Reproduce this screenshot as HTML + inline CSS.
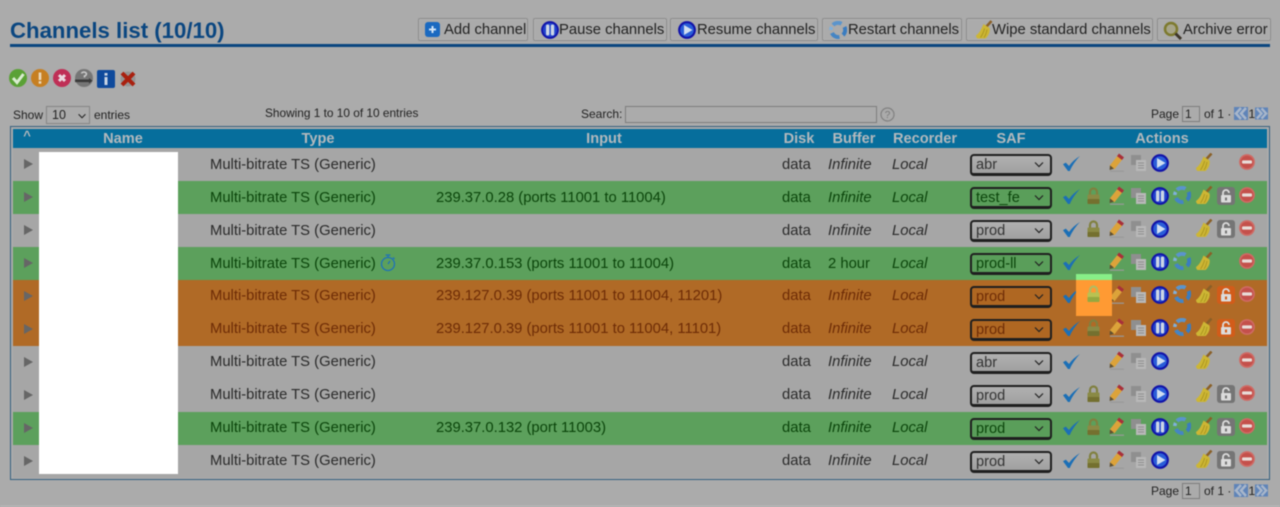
<!DOCTYPE html>
<html><head><meta charset="utf-8"><title>Channels list</title>
<style>
html,body{margin:0;padding:0}
body{width:1280px;height:507px;position:relative;overflow:hidden;background:#ababab;font-family:"Liberation Sans",sans-serif;color:#222}
div,span,svg{position:absolute}
#wrap{left:0;top:0;width:1280px;height:507px;filter:blur(.45px)}
.t{white-space:nowrap;line-height:16px}
h1{position:absolute;margin:0;left:10px;top:18px;font-size:22.2px;line-height:26px;color:#0a4680;font-weight:bold;white-space:nowrap}
.btn{top:18px;height:21px;border:1px solid #8e8e8e;border-radius:2px;box-shadow:inset 0 0 0 1px #b0b0b0;font-size:14.8px;line-height:22px;white-space:nowrap;color:#222}
.btn span{top:0;white-space:nowrap}
.th{top:131px;font-size:14.6px;font-weight:bold;color:#b3b9bd;line-height:16px;transform:translateX(-50%);white-space:nowrap}
.r{left:13px;width:1254px;height:33px;font-size:14.8px}
.g{background:#a6a6a6;color:#2a2a2a}
.v{background:#5ca05c;color:#0b450b}
.o{background:#b06a26;color:#6e2c06}
.r .t{top:8px}
.r.u .t{top:9px}
.ty{left:197px}.in{left:423px}.di{left:769px}.bu{left:815px;font-style:italic}.re{left:879px;font-style:italic}
.ar{left:11px;top:11px;width:0;height:0;border-left:9px solid #666;border-top:5.5px solid transparent;border-bottom:5.5px solid transparent}
.s{left:957px;top:6px;width:78px;height:17px;border:2px solid #1f1f1f;border-bottom-width:3px;border-radius:4px;line-height:18px;font-size:14.6px;padding:0;box-sizing:content-box}
.g .s{background:linear-gradient(#b0b0b0,#a0a0a0);color:#333}
.v .s{background:#5a9e5a;color:#0b450b}
.o .s{background:#af6722;color:#6e2c06}
.s b{position:absolute;left:4px;top:0;font-weight:normal}
.s svg{left:62px;top:5px;width:10px;height:7px}
.ck{left:1050px;top:8px;width:17px;height:15px}
.lk{left:1074px;top:6px;width:13px;height:17px}
.pe{left:1096px;top:5px;width:16px;height:19px}
.co{left:1118px;top:7px;width:15px;height:16px}
.pl{left:1138px;top:6px;width:18px;height:18px}
.rf{left:1160px;top:5px;width:18px;height:18px}
.br{left:1183px;top:5px;width:17px;height:18px}
.ul{left:1204px;top:6px;width:18px;height:18px;color:#757575}
.o .ul{color:#d25c1a}
.mi{left:1226px;top:6px;width:16px;height:16px}
.sm{font-size:12px;line-height:14px;white-space:nowrap;color:#222}
.inp{border:1px solid #7e7e7e;box-sizing:border-box;background:#ababab}
</style></head><body>
<svg width="0" height="0" style="left:0;top:0">
<symbol id="chk" viewBox="0 0 17 15"><path d="M0 8.2 L2.8 6.6 L6 10 C8.8 6 12.6 2.6 17 0 C12.8 4.4 9.2 9.4 6.8 15 L5 15 Z" fill="#1b6fb6"/></symbol>
<symbol id="lock" viewBox="0 0 13 17"><path d="M3 8V5a3.5 3.5 0 0 1 7 0v3" fill="none" stroke="#80803f" stroke-width="2.2"/><rect x="0.5" y="7.5" width="12" height="9.5" rx="1" fill="#8a8a45"/><rect x="0.5" y="12" width="12" height="5" rx="1" fill="#74702f"/></symbol>
<symbol id="lock2" viewBox="0 0 13 17"><path d="M3 8V5a3.5 3.5 0 0 1 7 0v3" fill="none" stroke="#b0bc62" stroke-width="2.2"/><rect x="0.5" y="7.5" width="12" height="9.5" rx="1" fill="#b8c252"/><rect x="0.5" y="12" width="12" height="5" rx="1" fill="#95a840"/></symbol>
<symbol id="pen" viewBox="0 0 16 19"><path d="M3 14.5 L11 4.5" stroke="#dca33a" stroke-width="6"/><path d="M10 0.5 L15 4.4 L13 7 L8 3.1 Z" fill="#a8303a"/><path d="M0.6 17 L1 12.4 L5 15.6 Z" fill="#5f5030"/><rect x="1" y="17.6" width="14" height="1.2" fill="#999"/></symbol>
<symbol id="copy" viewBox="0 0 15 16"><rect x="0" y="0" width="10" height="10" fill="#8f8f8f"/><rect x="5" y="5" width="10" height="11" fill="#b8b8b8"/><path d="M7 8h6M7 10.5h6M7 13h6" stroke="#8f8f8f"/></symbol>
<symbol id="play" viewBox="0 0 18 18"><circle cx="9" cy="9" r="8.9" fill="#1112a8"/><circle cx="9" cy="9" r="6.8" fill="#2a5ed8"/><path d="M6 4 L14.5 9 L6 14 Z" fill="#d0def0"/></symbol>
<symbol id="pause" viewBox="0 0 18 18"><circle cx="9" cy="9" r="8.9" fill="#1112a8"/><circle cx="9" cy="9" r="7" fill="#2244cc"/><rect x="5" y="3.5" width="3.4" height="11" rx="1.6" fill="#ccd6e6"/><rect x="9.8" y="3.5" width="3.4" height="11" rx="1.6" fill="#ccd6e6"/></symbol>
<symbol id="ref" viewBox="0 0 18 18"><path d="M4 4 A7 7 0 0 1 12.5 2.8" fill="none" stroke="#5a94cc" stroke-width="4"/><path d="M15.5 6 A7 7 0 0 1 14 14" fill="none" stroke="#3a7cc0" stroke-width="4"/><path d="M10.5 16 A7 7 0 0 1 3 12" fill="none" stroke="#4585c4" stroke-width="4"/><path d="M1.8 9 A7 7 0 0 1 2.6 6" fill="none" stroke="#7fb0dc" stroke-width="3.5"/></symbol>
<symbol id="broom" viewBox="0 0 17 18"><path d="M10.5 6 L15.5 0.5" stroke="#8a6028" stroke-width="2.6"/><path d="M7.5 3.5 L13.5 7.5 C14.5 11 12.5 15.5 9.5 18 L1.5 18 C0.8 17.5 0 16.5 0 15 C3.5 12.5 5.5 8.5 7.5 3.5 Z" fill="#cdb634"/><path d="M8.5 8 C8 11 6.5 14 4.5 17M11 9 C10.5 12 9.5 15 8 17" stroke="#ab9620" fill="none" stroke-width=".9"/></symbol>
<symbol id="un" viewBox="0 0 18 18"><rect width="18" height="18" rx="3" fill="currentColor"/><rect x="4" y="8" width="10" height="7.5" rx="1" fill="#dcdcdc"/><path d="M6 8V6a3 3 0 0 1 6 0" fill="none" stroke="#dcdcdc" stroke-width="1.8"/><rect x="8" y="10.5" width="2" height="3" fill="currentColor"/></symbol>
<symbol id="min" viewBox="0 0 16 16"><circle cx="8" cy="8" r="7.9" fill="#cf6a64"/><circle cx="8" cy="8" r="6.3" fill="#c4504b"/><rect x="3" y="6.4" width="10" height="3.2" rx="1" fill="#e8dcd8"/></symbol>
<symbol id="chev" viewBox="0 0 10 7"><path d="M1 1.5 L5 5.5 L9 1.5" fill="none" stroke="#222" stroke-width="1.2"/></symbol>
</svg>
<div id="wrap">
<h1>Channels list (10/10)</h1>
<div style="left:10px;top:44px;width:1260px;height:3px;background:#0a4680"></div>

<div class="btn" style="left:418px;width:108px"><svg style="left:6px;top:3px;width:15px;height:15px" viewBox="0 0 15 15"><rect width="15" height="15" rx="3" fill="#1a69c0"/><path d="M7.5 4v7M4 7.5h7" stroke="#cfe2f5" stroke-width="2"/></svg><span style="left:25px">Add channel</span></div>
<div class="btn" style="left:533px;width:132px"><svg style="left:7px;top:2px;width:18px;height:18px"><use href="#pause"/></svg><span style="left:25px">Pause channels</span></div>
<div class="btn" style="left:670px;width:146px"><svg style="left:7px;top:2px;width:18px;height:18px"><use href="#play"/></svg><span style="left:26px">Resume channels</span></div>
<div class="btn" style="left:822px;width:138px"><svg style="left:6px;top:2px;width:18px;height:18px"><use href="#ref"/></svg><span style="left:25px">Restart channels</span></div>
<div class="btn" style="left:966px;width:185px"><svg style="left:9px;top:1px;width:17px;height:19px"><use href="#broom"/></svg><span style="left:25px">Wipe standard channels</span></div>
<div class="btn" style="left:1157px;width:112px"><svg style="left:5px;top:2px;width:20px;height:20px" viewBox="0 0 20 20"><circle cx="8" cy="8" r="6" fill="#a7a58a" stroke="#7d7a2e" stroke-width="2.5"/><path d="M12.5 12.5 L18 18" stroke="#3c3428" stroke-width="3"/></svg><span style="left:25px">Archive error</span></div>

<svg style="left:9px;top:69px;width:18px;height:18px" viewBox="0 0 18 18"><circle cx="9" cy="9" r="9" fill="#5aa136"/><path d="M4 9 L8 13.5 L14.5 5" fill="none" stroke="#d9ecd0" stroke-width="3"/></svg>
<svg style="left:31px;top:69px;width:18px;height:18px" viewBox="0 0 18 18"><circle cx="9" cy="9" r="9" fill="#c67f22"/><rect x="7.7" y="3.5" width="2.6" height="7.5" fill="#e9d9bd"/><rect x="7.7" y="12.2" width="2.6" height="2.5" fill="#e9d9bd"/></svg>
<svg style="left:53px;top:69px;width:18px;height:18px" viewBox="0 0 18 18"><circle cx="9" cy="9" r="9" fill="#bf2f56"/><path d="M6 6 L12 12 M12 6 L6 12" stroke="#ead9df" stroke-width="3"/></svg>
<svg style="left:75px;top:69px;width:18px;height:18px" viewBox="0 0 18 18"><circle cx="9" cy="9" r="9" fill="#767676"/><rect x="0" y="10.5" width="14" height="2.6" fill="#3a3a3a"/><path d="M14 9 L17.5 11.8 L14 14.6 Z" fill="#3a3a3a"/><path d="M6.5 4.5a2.5 2 0 1 1 3 2.5v1.5" fill="none" stroke="#c8c8c8" stroke-width="1.6"/></svg>
<svg style="left:97px;top:70px;width:18px;height:18px" viewBox="0 0 18 18"><rect width="18" height="18" rx="2" fill="#0f4a9c"/><rect x="7.5" y="3" width="3" height="2.6" fill="#c9d4e4"/><rect x="7.5" y="7" width="3" height="8" fill="#c9d4e4"/></svg>
<svg style="left:120px;top:71px;width:16px;height:16px" viewBox="0 0 16 16"><circle cx="8" cy="8" r="7.5" fill="#949494"/><path d="M2 2 L14 14 M14 2 L2 14" stroke="#a9200f" stroke-width="4"/></svg>

<div class="sm" style="left:13px;top:108px">Show</div>
<div class="inp" style="left:46px;top:106px;width:44px;height:18px;border:1px solid #858585;font-size:12.5px;line-height:16px"><span style="left:5px;top:0">10</span><svg style="left:30px;top:6px;width:10px;height:6px"><use href="#chev"/></svg></div>
<div class="sm" style="left:94px;top:108px">entries</div>
<div class="sm" style="left:265px;top:105.5px;font-size:11.85px">Showing 1 to 10 of 10 entries</div>
<div class="sm" style="left:581px;top:107px">Search:</div>
<div class="inp" style="left:625px;top:106px;width:252px;height:17px"></div>
<svg style="left:880px;top:107px;width:15px;height:15px" viewBox="0 0 15 15"><circle cx="7.5" cy="7.5" r="6.5" fill="none" stroke="#808080" stroke-width="1.2"/><text x="7.5" y="11" font-size="10" text-anchor="middle" fill="#777" font-family="Liberation Sans">?</text></svg>

<div class="sm" style="left:1151px;top:107px">Page</div>
<div class="inp" style="left:1182px;top:106px;width:18px;height:16px;font-size:12px;line-height:14px"><span style="left:2px;top:0">1</span></div>
<div class="sm" style="left:1204px;top:107px">of 1 ·</div>
<svg style="left:1234px;top:107px;width:14px;height:13px" viewBox="0 0 14 13"><rect width="14" height="13" fill="#5f84b8"/><path d="M7 1 L2 6.5 L7 12M12 1 L7 6.5 L12 12" fill="none" stroke="#a8b6ca" stroke-width="2.6"/></svg>
<div class="sm" style="left:1248.5px;top:107px">1</div>
<svg style="left:1255px;top:107px;width:13px;height:13px" viewBox="0 0 14 13"><rect width="14" height="13" fill="#5f84b8"/><path d="M2 1 L7 6.5 L2 12M7 1 L12 6.5 L7 12" fill="none" stroke="#a8b6ca" stroke-width="2.6"/></svg>

<div style="left:10px;top:126px;width:1258px;height:352px;border:1.5px solid #36607f"></div>
<div style="left:13px;top:129px;width:1254px;height:19px;background:#066e9c"></div>
<div class="th" style="left:27px;top:128px;font-size:13px">^</div>
<div class="th" style="left:123px">Name</div>
<div class="th" style="left:318px">Type</div>
<div class="th" style="left:604px">Input</div>
<div class="th" style="left:799px">Disk</div>
<div class="th" style="left:854px">Buffer</div>
<div class="th" style="left:925px">Recorder</div>
<div class="th" style="left:1011px">SAF</div>
<div class="th" style="left:1162px">Actions</div>

<div class="r g u" style="top:148px"><div class="ar"></div><div class="t ty">Multi-bitrate TS (Generic)</div><div class="t di">data</div><div class="t bu">Infinite</div><div class="t re">Local</div><div class="s"><b>abr</b><svg><use href="#chev"/></svg></div><svg class="ck"><use href="#chk"/></svg><svg class="pe"><use href="#pen"/></svg><svg class="co"><use href="#copy"/></svg><svg class="pl"><use href="#play"/></svg><svg class="br"><use href="#broom"/></svg><svg class="mi"><use href="#min"/></svg></div>

<div class="r v u" style="top:181px"><div class="ar"></div><div class="t ty">Multi-bitrate TS (Generic)</div><div class="t in">239.37.0.28 (ports 11001 to 11004)</div><div class="t di">data</div><div class="t bu">Infinite</div><div class="t re">Local</div><div class="s"><b>test_fe</b><svg><use href="#chev"/></svg></div><svg class="ck"><use href="#chk"/></svg><svg class="lk"><use href="#lock"/></svg><svg class="pe"><use href="#pen"/></svg><svg class="co"><use href="#copy"/></svg><svg class="pl"><use href="#pause"/></svg><svg class="rf"><use href="#ref"/></svg><svg class="br"><use href="#broom"/></svg><svg class="ul"><use href="#un"/></svg><svg class="mi"><use href="#min"/></svg></div>

<div class="r g u" style="top:214px"><div class="ar"></div><div class="t ty">Multi-bitrate TS (Generic)</div><div class="t di">data</div><div class="t bu">Infinite</div><div class="t re">Local</div><div class="s"><b>prod</b><svg><use href="#chev"/></svg></div><svg class="ck"><use href="#chk"/></svg><svg class="lk"><use href="#lock"/></svg><svg class="pe"><use href="#pen"/></svg><svg class="co"><use href="#copy"/></svg><svg class="pl"><use href="#play"/></svg><svg class="br"><use href="#broom"/></svg><svg class="ul"><use href="#un"/></svg><svg class="mi"><use href="#min"/></svg></div>

<div class="r v u" style="top:247px"><div class="ar"></div><div class="t ty">Multi-bitrate TS (Generic)</div><svg style="left:367px;top:7px;width:16px;height:18px" viewBox="0 0 16 18"><circle cx="8" cy="10" r="6.5" fill="none" stroke="#1f72b8" stroke-width="1.3"/><path d="M5.5 1h5M8 1v2.5M8 10L10 7M13 3.5l1.5 1.5" fill="none" stroke="#1f72b8" stroke-width="1.3"/></svg><div class="t in">239.37.0.153 (ports 11001 to 11004)</div><div class="t di">data</div><div class="t bu" style="font-style:normal">2 hour</div><div class="t re">Local</div><div class="s"><b>prod-ll</b><svg><use href="#chev"/></svg></div><svg class="ck"><use href="#chk"/></svg><svg class="pe"><use href="#pen"/></svg><svg class="co"><use href="#copy"/></svg><svg class="pl"><use href="#pause"/></svg><svg class="rf"><use href="#ref"/></svg><svg class="br"><use href="#broom"/></svg><svg class="mi"><use href="#min"/></svg></div>

<div class="r o" style="top:280px"><div class="ar"></div><div class="t ty">Multi-bitrate TS (Generic)</div><div class="t in">239.127.0.39 (ports 11001 to 11004, 11201)</div><div class="t di">data</div><div class="t bu">Infinite</div><div class="t re">Local</div><div class="s"><b>prod</b><svg><use href="#chev"/></svg></div><svg class="ck"><use href="#chk"/></svg><svg class="pe"><use href="#pen"/></svg><svg class="co"><use href="#copy"/></svg><svg class="pl"><use href="#pause"/></svg><svg class="rf"><use href="#ref"/></svg><svg class="br"><use href="#broom"/></svg><svg class="ul"><use href="#un"/></svg><svg class="mi"><use href="#min"/></svg></div>

<div class="r o" style="top:313px"><div class="ar"></div><div class="t ty">Multi-bitrate TS (Generic)</div><div class="t in">239.127.0.39 (ports 11001 to 11004, 11101)</div><div class="t di">data</div><div class="t bu">Infinite</div><div class="t re">Local</div><div class="s"><b>prod</b><svg><use href="#chev"/></svg></div><svg class="ck"><use href="#chk"/></svg><svg class="lk"><use href="#lock"/></svg><svg class="pe"><use href="#pen"/></svg><svg class="co"><use href="#copy"/></svg><svg class="pl"><use href="#pause"/></svg><svg class="rf"><use href="#ref"/></svg><svg class="br"><use href="#broom"/></svg><svg class="ul"><use href="#un"/></svg><svg class="mi"><use href="#min"/></svg></div>

<div class="r g" style="top:346px"><div class="ar"></div><div class="t ty">Multi-bitrate TS (Generic)</div><div class="t di">data</div><div class="t bu">Infinite</div><div class="t re">Local</div><div class="s"><b>abr</b><svg><use href="#chev"/></svg></div><svg class="ck"><use href="#chk"/></svg><svg class="pe"><use href="#pen"/></svg><svg class="co"><use href="#copy"/></svg><svg class="pl"><use href="#play"/></svg><svg class="br"><use href="#broom"/></svg><svg class="mi"><use href="#min"/></svg></div>

<div class="r g" style="top:379px"><div class="ar"></div><div class="t ty">Multi-bitrate TS (Generic)</div><div class="t di">data</div><div class="t bu">Infinite</div><div class="t re">Local</div><div class="s"><b>prod</b><svg><use href="#chev"/></svg></div><svg class="ck"><use href="#chk"/></svg><svg class="lk"><use href="#lock"/></svg><svg class="pe"><use href="#pen"/></svg><svg class="co"><use href="#copy"/></svg><svg class="pl"><use href="#play"/></svg><svg class="br"><use href="#broom"/></svg><svg class="ul"><use href="#un"/></svg><svg class="mi"><use href="#min"/></svg></div>

<div class="r v" style="top:412px"><div class="ar"></div><div class="t ty">Multi-bitrate TS (Generic)</div><div class="t in">239.37.0.132 (port 11003)</div><div class="t di">data</div><div class="t bu">Infinite</div><div class="t re">Local</div><div class="s"><b>prod</b><svg><use href="#chev"/></svg></div><svg class="ck"><use href="#chk"/></svg><svg class="lk"><use href="#lock"/></svg><svg class="pe"><use href="#pen"/></svg><svg class="co"><use href="#copy"/></svg><svg class="pl"><use href="#pause"/></svg><svg class="rf"><use href="#ref"/></svg><svg class="br"><use href="#broom"/></svg><svg class="ul"><use href="#un"/></svg><svg class="mi"><use href="#min"/></svg></div>

<div class="r g" style="top:445px"><div class="ar"></div><div class="t ty">Multi-bitrate TS (Generic)</div><div class="t di">data</div><div class="t bu">Infinite</div><div class="t re">Local</div><div class="s"><b>prod</b><svg><use href="#chev"/></svg></div><svg class="ck"><use href="#chk"/></svg><svg class="lk"><use href="#lock"/></svg><svg class="pe"><use href="#pen"/></svg><svg class="co"><use href="#copy"/></svg><svg class="pl"><use href="#play"/></svg><svg class="br"><use href="#broom"/></svg><svg class="ul"><use href="#un"/></svg><svg class="mi"><use href="#min"/></svg></div>

<div style="left:39px;top:152px;width:139px;height:322px;background:#fff"></div>

<div style="left:1076px;top:274px;width:36px;height:6px;background:#88ee88"></div>
<div style="left:1076px;top:280px;width:36px;height:36px;background:#ff9a33"></div>
<svg style="left:1087px;top:285px;width:13px;height:17px"><use href="#lock2"/></svg>

<div class="sm" style="left:1151px;top:484px">Page</div>
<div class="inp" style="left:1182px;top:483px;width:18px;height:16px;font-size:12px;line-height:14px"><span style="left:2px;top:0">1</span></div>
<div class="sm" style="left:1204px;top:484px">of 1 ·</div>
<svg style="left:1234px;top:484px;width:14px;height:13px" viewBox="0 0 14 13"><rect width="14" height="13" fill="#5f84b8"/><path d="M7 1 L2 6.5 L7 12M12 1 L7 6.5 L12 12" fill="none" stroke="#a8b6ca" stroke-width="2.6"/></svg>
<div class="sm" style="left:1248.5px;top:484px">1</div>
<svg style="left:1255px;top:484px;width:13px;height:13px" viewBox="0 0 14 13"><rect width="14" height="13" fill="#5f84b8"/><path d="M2 1 L7 6.5 L2 12M7 1 L12 6.5 L7 12" fill="none" stroke="#a8b6ca" stroke-width="2.6"/></svg>
<div style="left:0;top:505px;width:1280px;height:2px;background:#b4b4b4"></div>
</div>
</body></html>
